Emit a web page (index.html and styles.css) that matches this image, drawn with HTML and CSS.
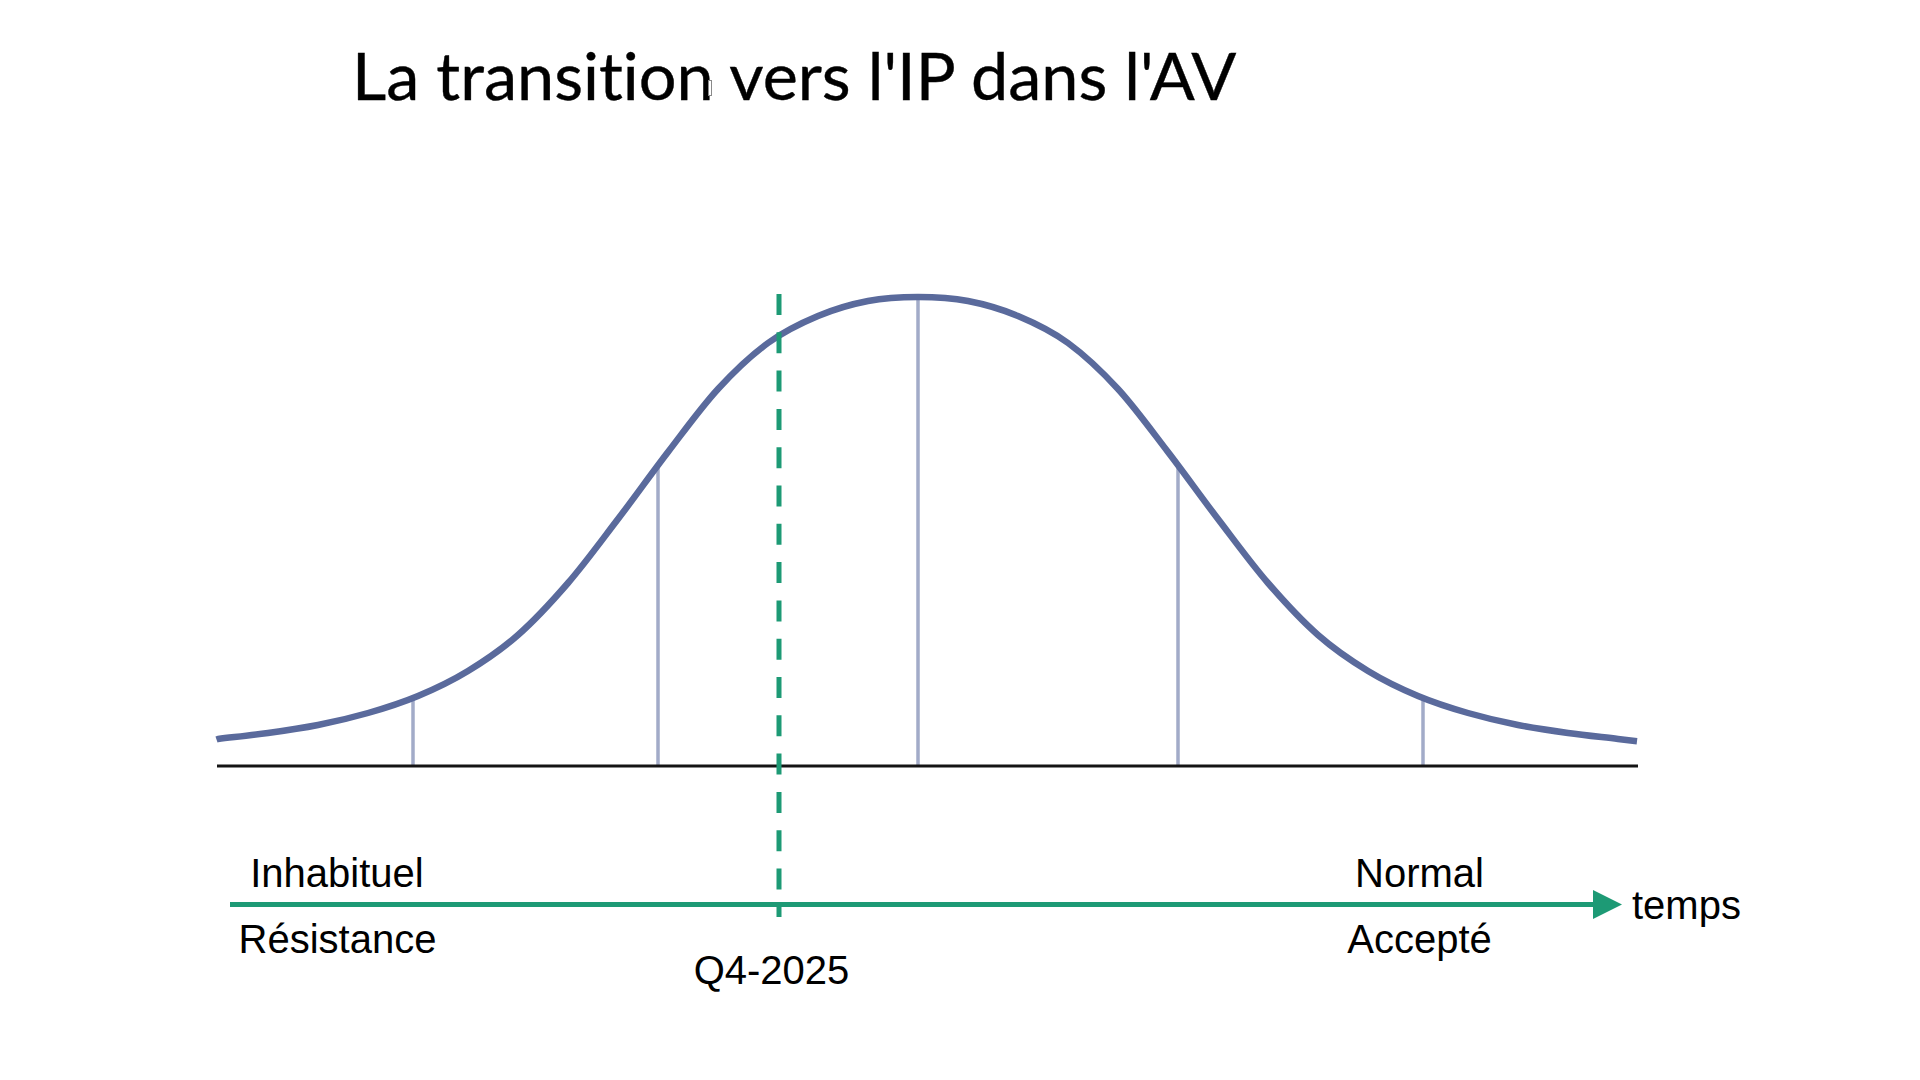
FILE: index.html
```html
<!DOCTYPE html>
<html lang="fr">
<head>
<meta charset="utf-8">
<title>La transition vers l'IP dans l'AV</title>
<link rel="stylesheet" href="styles.css">
</head>
<body>
<main class="slide">
  <header class="slide-head">
    <h1 class="slide-title">La transition vers l'IP dans l'AV</h1>
    <span class="text-cursor" aria-hidden="true"></span>
  </header>
  <svg class="chart" viewBox="0 120 1920 960" width="1920" height="960" xmlns="http://www.w3.org/2000/svg">
    <g class="guides">
      <line x1="413" y1="697" x2="413" y2="766"/>
      <line x1="658" y1="467" x2="658" y2="766"/>
      <line x1="918" y1="297" x2="918" y2="766"/>
      <line x1="1178" y1="467" x2="1178" y2="766"/>
      <line x1="1423" y1="697" x2="1423" y2="766"/>
    </g>
    <path class="bell" d="M216.5 739.5 L218 739 C234.7 737 251.3 735.3 268 733 C284.7 730.7 301.3 728.3 318 725 C334.7 721.7 351.3 717.8 368 713 C384.7 708.2 401.3 703 418 696 C434.7 689 451.3 681.2 468 671 C484.7 660.8 501.3 649.7 518 635 C534.7 620.3 551.3 602.3 568 583 C584.7 563.7 601.3 540.8 618 519 C634.7 497.2 651.3 473.7 668 452 C684.7 430.3 701.3 407.2 718 389 C734.7 370.8 751.3 355.2 768 343 C784.7 330.8 801.3 323 818 316 C834.7 309 851.3 304.2 868 301 C884.7 297.8 901.3 297 918 297 C934.7 297 951.3 297.8 968 301 C984.7 304.2 1001.3 309 1018 316 C1034.7 323 1051.3 330.8 1068 343 C1084.7 355.2 1101.3 370.8 1118 389 C1134.7 407.2 1151.3 430.3 1168 452 C1184.7 473.7 1201.3 497.2 1218 519 C1234.7 540.8 1251.3 563.7 1268 583 C1284.7 602.3 1301.3 620.3 1318 635 C1334.7 649.7 1351.3 660.8 1368 671 C1384.7 681.2 1401.3 689 1418 696 C1434.7 703 1451.3 708.2 1468 713 C1484.7 717.8 1501.3 721.7 1518 725 C1534.7 728.3 1551.3 730.7 1568 733 C1584.7 735.3 1601.3 737 1618 739 L1637 741.3"/>
    <line class="axis" x1="217" y1="766" x2="1638" y2="766"/>
    <line class="time-line" x1="230" y1="904.5" x2="1598" y2="904.5"/>
    <polygon class="time-head" points="1593,890 1622,904.5 1593,919"/>
    <line class="marker" x1="779" y1="294" x2="779" y2="917"/>
    <g class="labels">
      <text x="337" y="887">Inhabituel</text>
      <text x="337.5" y="953">Résistance</text>
      <text x="771.5" y="984">Q4-2025</text>
      <text x="1419.5" y="887">Normal</text>
      <text x="1419.5" y="953">Accepté</text>
      <text class="end-label" x="1632" y="919">temps</text>
    </g>
  </svg>
</main>
</body>
</html>
```
FILE: styles.css
```css
html, body {
  margin: 0;
  padding: 0;
  background: #ffffff;
}

.slide {
  width: 1920px;
  height: 1080px;
  overflow: hidden;
  display: flex;
  flex-direction: column;
}

.slide-head {
  position: relative;
  height: 120px;
  box-sizing: border-box;
  padding: 41px 0 0 352px;
}

.slide-title {
  margin: 0;
  font-family: "Lato", "Open Sans", sans-serif;
  font-weight: 400;
  font-size: 66.6px;
  line-height: 1;
  color: #000000;
  white-space: nowrap;
  font-variant-ligatures: none;
  font-feature-settings: "liga" 0, "clig" 0;
  -webkit-text-stroke: 0.4px #000000;
}

.text-cursor {
  position: absolute;
  left: 708px;
  top: 80px;
  width: 2px;
  height: 14px;
  border: 1px solid #8a8a8a;
  background: #ffffff;
}

.chart {
  display: block;
}

.guides line {
  stroke: #a2abc8;
  stroke-width: 3.5;
}

.bell {
  fill: none;
  stroke: #5a6a9c;
  stroke-width: 6.5;
  stroke-linejoin: round;
}

.axis {
  stroke: #141414;
  stroke-width: 3;
}

.time-line {
  stroke: #1d9a75;
  stroke-width: 5;
}

.time-head {
  fill: #1d9a75;
}

.marker {
  stroke: #1d9a75;
  stroke-width: 5;
  stroke-dasharray: 21 17.3;
}

.labels text {
  font-family: "Liberation Sans", Arial, sans-serif;
  font-size: 40px;
  fill: #000000;
  text-anchor: middle;
}

.labels .end-label {
  text-anchor: start;
}
```
